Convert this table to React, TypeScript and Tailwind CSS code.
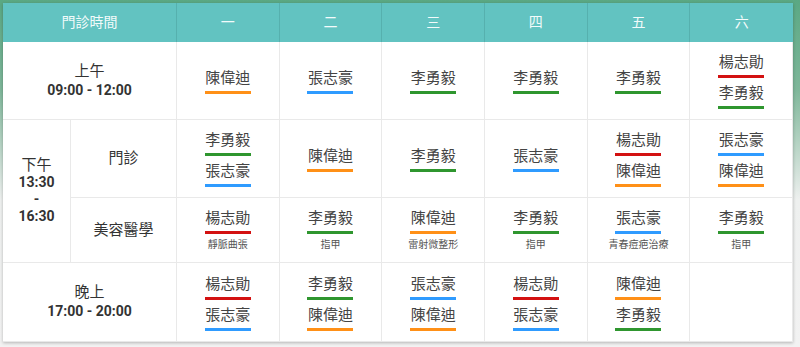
import React from "react";

type Doc = { name: string; note?: string };
type Row = Doc[][];

const barColor: Record<string, string> = {
  陳偉迪: "bg-[#ff9017]",
  張志豪: "bg-[#2f9bff]",
  李勇毅: "bg-[#2f962f]",
  楊志勛: "bg-[#d31111]",
};

const days = ["一", "二", "三", "四", "五", "六"];

const morning: Row = [
  [{ name: "陳偉迪" }],
  [{ name: "張志豪" }],
  [{ name: "李勇毅" }],
  [{ name: "李勇毅" }],
  [{ name: "李勇毅" }],
  [{ name: "楊志勛" }, { name: "李勇毅" }],
];

const afternoon: Row = [
  [{ name: "李勇毅" }, { name: "張志豪" }],
  [{ name: "陳偉迪" }],
  [{ name: "李勇毅" }],
  [{ name: "張志豪" }],
  [{ name: "楊志勛" }, { name: "陳偉迪" }],
  [{ name: "張志豪" }, { name: "陳偉迪" }],
];

const beauty: Row = [
  [{ name: "楊志勛", note: "靜脈曲張" }],
  [{ name: "李勇毅", note: "指甲" }],
  [{ name: "陳偉迪", note: "雷射微整形" }],
  [{ name: "李勇毅", note: "指甲" }],
  [{ name: "張志豪", note: "青春痘疤治療" }],
  [{ name: "李勇毅", note: "指甲" }],
];

const evening: Row = [
  [{ name: "楊志勛" }, { name: "張志豪" }],
  [{ name: "李勇毅" }, { name: "陳偉迪" }],
  [{ name: "張志豪" }, { name: "陳偉迪" }],
  [{ name: "楊志勛" }, { name: "張志豪" }],
  [{ name: "陳偉迪" }, { name: "李勇毅" }],
  [],
];

function DocItem({ name, note }: Doc) {
  return (
    <div className="flex flex-col items-center">
      <span className="text-[15px] leading-[20px] text-[#444]">{name}</span>
      <span className={`mt-[3px] h-[3px] w-[46px] ${barColor[name]}`} />
      {note && (
        <span className="mt-[4px] text-[10px] leading-[14px] text-[#555]">
          {note}
        </span>
      )}
    </div>
  );
}

function Cell({ docs }: { docs: Doc[] }) {
  return (
    <div className="flex flex-col items-center justify-center gap-[5px] border-r border-b border-[#e9e9e9]">
      {docs.map((d, i) => (
        <DocItem key={i} {...d} />
      ))}
    </div>
  );
}

function Label({ children, className = "" }: { children: React.ReactNode; className?: string }) {
  return (
    <div
      className={`flex flex-col items-center justify-center border-r border-b border-[#e9e9e9] text-[#333] ${className}`}
    >
      {children}
    </div>
  );
}

export default function App() {
  return (
    <div className="w-[800px] h-[347px] bg-[linear-gradient(to_bottom,#5aa883_0px,#7fb79a_90px,#eef0ef_200px,#f2f2f2_347px)] pt-[3px] pl-[3px] pr-[7px] font-['Roboto','Noto_Sans_CJK_TC',sans-serif]">
      <div className="grid grid-cols-[68px_106px_repeat(6,1fr)] grid-rows-[39px_78px_78px_65px_79px] bg-white shadow-[0_1px_3px_rgba(0,0,0,0.25)]">
        <div className="col-span-2 flex items-center justify-center bg-[#62c3c1] border-r border-[#56b0ae] text-[14px] text-[#f2fbfb]">
          門診時間
        </div>
        {days.map((d, i) => (
          <div
            key={d}
            className={`flex items-center justify-center bg-[#62c3c1] text-[14px] text-[#f2fbfb] ${i < 5 ? "border-r border-[#56b0ae]" : ""}`}
          >
            {d}
          </div>
        ))}

        <Label className="col-span-2 leading-[19px]">
          <span className="text-[15px]">上午</span>
          <span className="text-[14px] font-bold">09:00 - 12:00</span>
        </Label>
        {morning.map((docs, i) => (
          <Cell key={i} docs={docs} />
        ))}

        <Label className="row-span-2 leading-[17px]">
          <span className="text-[15px]">下午</span>
          <span className="text-[14px] font-bold">13:30</span>
          <span className="text-[14px] font-bold">-</span>
          <span className="text-[14px] font-bold">16:30</span>
        </Label>
        <Label className="text-[15px]">門診</Label>
        {afternoon.map((docs, i) => (
          <Cell key={i} docs={docs} />
        ))}
        <Label className="text-[15px]">美容醫學</Label>
        {beauty.map((docs, i) => (
          <Cell key={i} docs={docs} />
        ))}

        <Label className="col-span-2 leading-[19px]">
          <span className="text-[15px]">晚上</span>
          <span className="text-[14px] font-bold">17:00 - 20:00</span>
        </Label>
        {evening.map((docs, i) => (
          <Cell key={i} docs={docs} />
        ))}
      </div>
    </div>
  );
}
